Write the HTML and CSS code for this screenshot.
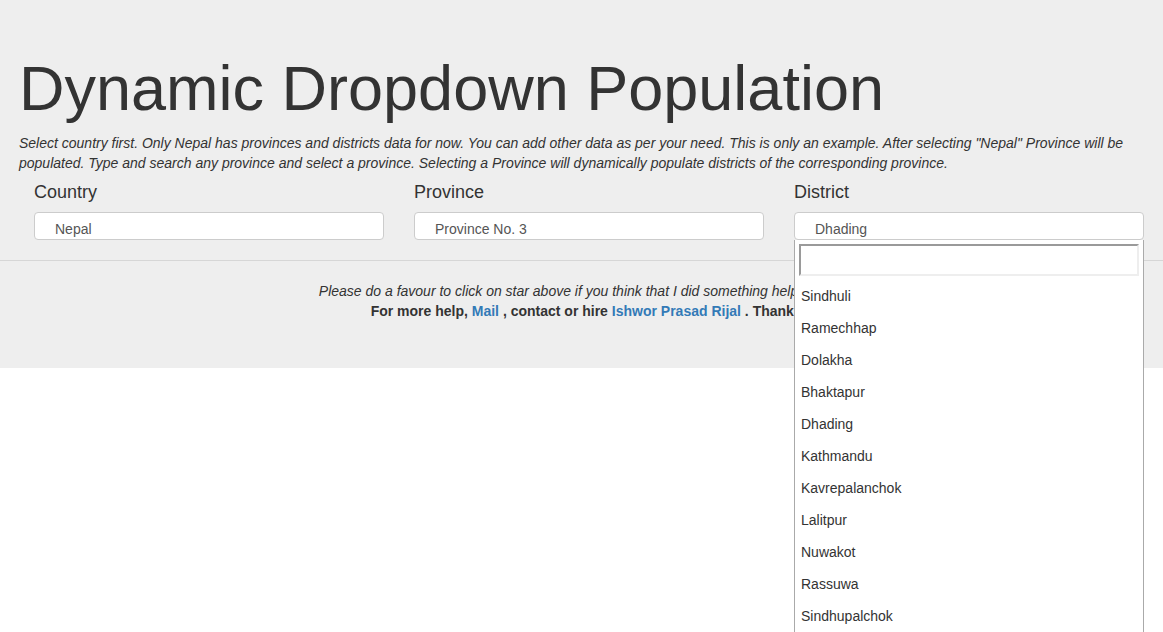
FILE: index.html
```html
<!DOCTYPE html>
<html lang="en">
<head>
<meta charset="utf-8">
<title>Dynamic Dropdown Population</title>
<link rel="stylesheet" href="styles.css">
</head>
<body>
<div class="jumbotron">
  <div class="container">
    <h1 class="title">Dynamic Dropdown Population</h1>
    <p class="intro">Select country first. Only Nepal has provinces and districts data for now. You can add other data as per your need. This is only an example. After selecting "Nepal" Province will be populated. Type and search any province and select a province. Selecting a Province will dynamically populate districts of the corresponding province.</p>
    <div class="row">
      <div class="col">
        <div class="field-label">Country</div>
        <div class="select-box">Nepal</div>
      </div>
      <div class="col">
        <div class="field-label">Province</div>
        <div class="select-box">Province No. 3</div>
      </div>
      <div class="col">
        <div class="field-label">District</div>
        <div class="select-wrap">
          <div class="select-box">Dhading</div>
          <div class="dropdown">
            <div class="search-wrap"><div class="search-field"></div></div>
            <ul class="options">
              <li>Sindhuli</li>
              <li>Ramechhap</li>
              <li>Dolakha</li>
              <li>Bhaktapur</li>
              <li>Dhading</li>
              <li>Kathmandu</li>
              <li>Kavrepalanchok</li>
              <li>Lalitpur</li>
              <li>Nuwakot</li>
              <li>Rassuwa</li>
              <li>Sindhupalchok</li>
              <li>Chitwan</li>
              <li>Makwanpur</li>
            </ul>
          </div>
        </div>
      </div>
    </div>
  </div>
  <div class="divider"></div>
  <div class="footer">
    <p class="thanks-note">Please do a favour to click on star above if you think that I did something helpful/useful.</p>
    <p class="contact">For more help, <a href="#">Mail</a> , contact or hire <a href="#">Ishwor Prasad Rijal</a> . Thanks!</p>
  </div>
</div>
</body>
</html>
```

FILE: styles.css
```css
html, body {
  margin: 0;
}
body {
  min-height: 632px;
  font-family: "Liberation Sans", Arial, sans-serif;
  font-size: 14px;
  line-height: 20px;
  color: #333;
  background: #fff;
}
.jumbotron {
  background: #eee;
  padding: 54px 0 47px;
}
.container {
  padding: 0 19px;
}
.title {
  margin: 0 0 10px;
  font-size: 63px;
  line-height: 69px;
  font-weight: normal;
  color: #333;
}
.intro {
  margin: 0 0 9px;
  font-style: italic;
}
.row {
  display: flex;
}
.col {
  flex: 0 0 380px;
  padding: 0 15px;
  box-sizing: border-box;
}
.field-label {
  font-size: 18px;
  line-height: 20px;
  margin-bottom: 10px;
}
.select-wrap {
  position: relative;
}
.select-box {
  height: 28px;
  box-sizing: border-box;
  background: #fff;
  border: 1px solid #ccc;
  border-radius: 4px;
  padding: 6px 19px 0 20px;
  color: #555;
  line-height: 20px;
}
.dropdown {
  position: absolute;
  left: 0;
  top: 28px;
  width: 350px;
  height: 392px;
  overflow: hidden;
  box-sizing: border-box;
  background: #fff;
  border: 1px solid #aaa;
  border-top: none;
  border-bottom: none;
  z-index: 5;
}
.search-wrap {
  padding: 4px;
}
.search-field {
  height: 32px;
  box-sizing: border-box;
  border-top: 2px solid #9a9a9a;
  border-left: 2px solid #9a9a9a;
  border-bottom: 2px solid #eee;
  border-right: 2px solid #eee;
  background: #fff;
}
.options {
  list-style: none;
  margin: 0;
  padding: 0;
}
.options li {
  padding: 6px;
  color: #333;
}
.divider {
  border-top: 1px solid #d6d6d6;
  margin: 20px 0;
}
.footer {
  text-align: center;
  padding-left: 14px;
}
.footer p {
  margin: 0;
}
.thanks-note {
  font-style: italic;
}
.contact {
  font-weight: bold;
}
.contact a {
  color: #337ab7;
  text-decoration: none;
}
```
